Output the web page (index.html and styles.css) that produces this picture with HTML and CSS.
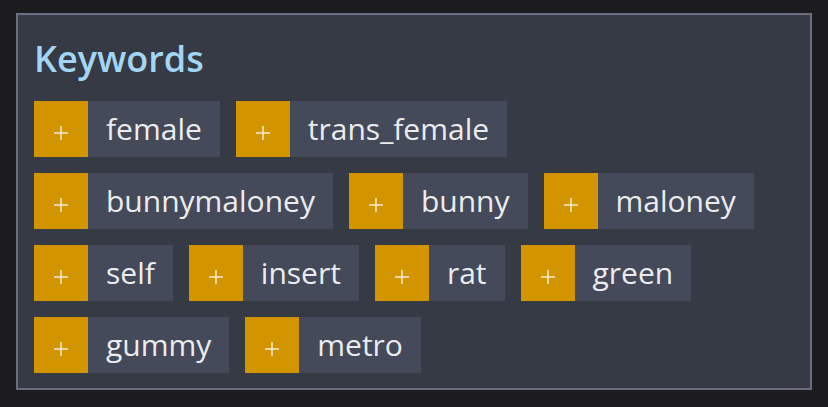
FILE: index.html
```html
<!DOCTYPE html>
<html lang="en">
<head>
<meta charset="utf-8">
<title>Keywords</title>
<link rel="stylesheet" href="styles.css">
</head>
<body>
<section class="panel">
  <h2 class="title">Keywords</h2>
  <div class="tags">
    <div class="tag"><span class="add"><svg width="14" height="14" viewBox="0 0 14 14"><path d="M7 0V14M0 7H14" stroke="#f4ecd8" stroke-width="1.5"/></svg></span><span class="label">female</span></div>
    <div class="tag"><span class="add"><svg width="14" height="14" viewBox="0 0 14 14"><path d="M7 0V14M0 7H14" stroke="#f4ecd8" stroke-width="1.5"/></svg></span><span class="label">trans_female</span></div>
    <div class="tag"><span class="add"><svg width="14" height="14" viewBox="0 0 14 14"><path d="M7 0V14M0 7H14" stroke="#f4ecd8" stroke-width="1.5"/></svg></span><span class="label">bunnymaloney</span></div>
    <div class="tag"><span class="add"><svg width="14" height="14" viewBox="0 0 14 14"><path d="M7 0V14M0 7H14" stroke="#f4ecd8" stroke-width="1.5"/></svg></span><span class="label">bunny</span></div>
    <div class="tag"><span class="add"><svg width="14" height="14" viewBox="0 0 14 14"><path d="M7 0V14M0 7H14" stroke="#f4ecd8" stroke-width="1.5"/></svg></span><span class="label">maloney</span></div>
    <div class="tag"><span class="add"><svg width="14" height="14" viewBox="0 0 14 14"><path d="M7 0V14M0 7H14" stroke="#f4ecd8" stroke-width="1.5"/></svg></span><span class="label">self</span></div>
    <div class="tag"><span class="add"><svg width="14" height="14" viewBox="0 0 14 14"><path d="M7 0V14M0 7H14" stroke="#f4ecd8" stroke-width="1.5"/></svg></span><span class="label">insert</span></div>
    <div class="tag"><span class="add"><svg width="14" height="14" viewBox="0 0 14 14"><path d="M7 0V14M0 7H14" stroke="#f4ecd8" stroke-width="1.5"/></svg></span><span class="label">rat</span></div>
    <div class="tag"><span class="add"><svg width="14" height="14" viewBox="0 0 14 14"><path d="M7 0V14M0 7H14" stroke="#f4ecd8" stroke-width="1.5"/></svg></span><span class="label">green</span></div>
    <div class="tag"><span class="add"><svg width="14" height="14" viewBox="0 0 14 14"><path d="M7 0V14M0 7H14" stroke="#f4ecd8" stroke-width="1.5"/></svg></span><span class="label">gummy</span></div>
    <div class="tag"><span class="add"><svg width="14" height="14" viewBox="0 0 14 14"><path d="M7 0V14M0 7H14" stroke="#f4ecd8" stroke-width="1.5"/></svg></span><span class="label">metro</span></div>
  </div>
</section>
</body>
</html>
```

FILE: styles.css
```css
html, body {
  margin: 0;
  padding: 0;
}
body {
  background: #1c1c1f;
  font-family: "Open Sans", "Noto Sans", sans-serif;
  padding: 13px 16px 0 16px;
  width: 796px;
}
.panel {
  box-sizing: border-box;
  width: 796px;
  height: 377px;
  border: 2px solid #6c6c80;
  background: #353a45;
  padding: 24px 16px 16px 16px;
}
.title {
  margin: 0 0 22px 0;
  font-size: 36px;
  line-height: 40px;
  font-weight: 600;
  color: #a3d5f5;
}
.tags {
  display: flex;
  flex-wrap: wrap;
  gap: 16px;
}
.tag {
  display: flex;
  height: 56px;
}
.add {
  width: 54px;
  background: #d29500;
  display: flex;
  align-items: center;
  justify-content: center;
  padding-top: 8px;
  box-sizing: border-box;
}
.add svg {
  display: block;
}
.label {
  background: #444a5a;
  color: #ececee;
  font-size: 30px;
  line-height: 56px;
  padding: 0 18px;
}
```
